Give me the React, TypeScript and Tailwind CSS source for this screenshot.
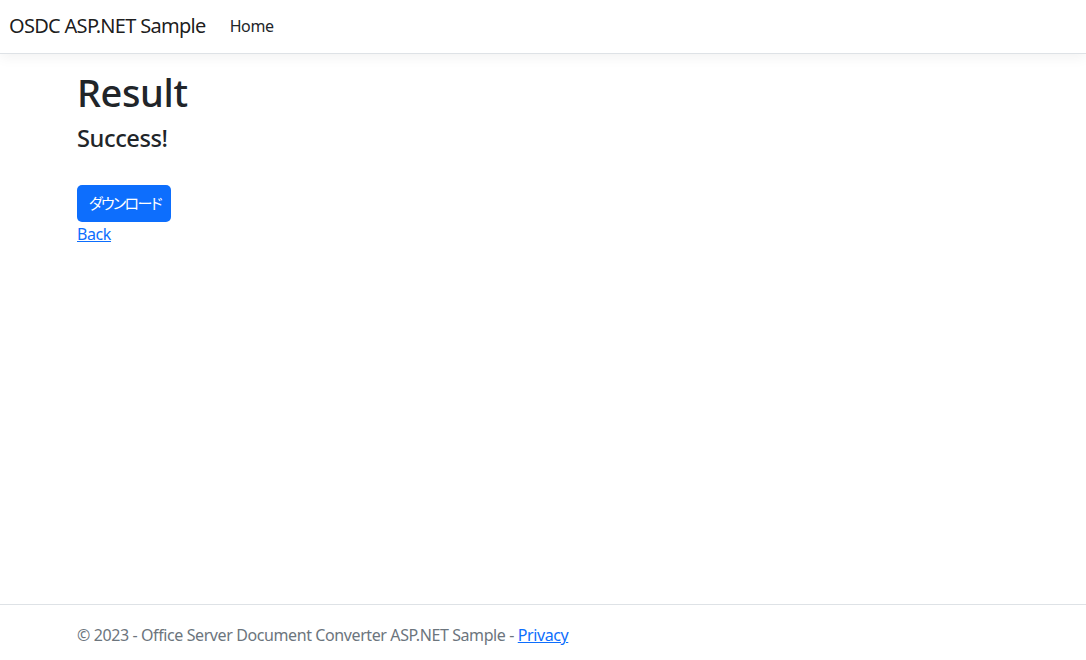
const font = "font-['Noto_Sans','Noto_Sans_CJK_JP',sans-serif] tracking-[-0.025em]";

const App = () => {
  return (
    <div className={`${font} flex h-[665px] flex-col bg-white text-[#212529]`}>
      <header>
        <nav className="mb-4 flex h-[54px] items-center border-b border-[#dee2e6] bg-white pl-[9px] pr-3 shadow-[0_4px_12px_rgba(0,0,0,0.05)]">
          <a href="#" className="mr-4 -translate-y-px text-[20px] leading-[30px] tracking-[-0.035em] text-black/90">
            OSDC ASP.NET Sample
          </a>
          <a href="#" className="-translate-y-px px-2 text-[16px] leading-6 text-[#212529]">
            Home
          </a>
        </nav>
      </header>
      <main className="mx-auto w-[960px] flex-1 pl-[14px] pr-3">
        <h1 className="mb-2 text-[38px] font-medium leading-[1.2]">Result</h1>
        <h4 className="mb-2 mt-[2px] text-[23.6px] font-medium leading-[1.2]">Success!</h4>
        <form className="mt-[33px]">
          <button
            type="button"
            className="rounded-[5px] bg-[#0d6efd] py-[6px] pl-[12px] pr-[10px] text-[15px] leading-[25px] tracking-[-0.11em] text-white [font-feature-settings:'palt']"
          >
            ダウンロード
          </button>
        </form>
        <a href="#" className="text-[16px] leading-6 text-[#0d6efd] underline">
          Back
        </a>
      </main>
      <footer className="h-[61px] border-t border-[#dee2e6] text-[16px] leading-[60px] text-[#6c757d]">
        <div className="mx-auto w-[960px] whitespace-nowrap pl-[14px] pr-3">
          © 2023 - Office Server Document Converter ASP.NET Sample -{" "}
          <a href="#" className="text-[#0d6efd] underline">
            Privacy
          </a>
        </div>
      </footer>
    </div>
  );
};

export default App;
